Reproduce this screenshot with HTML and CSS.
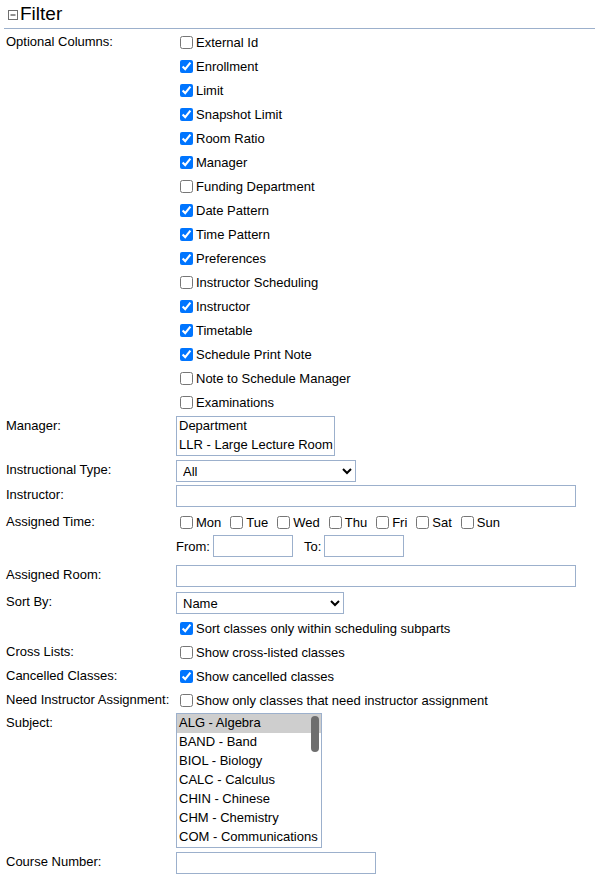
FILE: index.html
```html
<!DOCTYPE html>
<html>
<head>
<meta charset="utf-8">
<title>Filter</title>
<link rel="stylesheet" href="styles.css">
</head>
<body>
<div class="page">
  <div class="header">
    <svg class="toggle" width="10" height="10" viewBox="0 0 10 10"><rect x="0.5" y="0.5" width="9" height="9" fill="#fff" stroke="#6f6f6f"/><line x1="2.5" y1="5" x2="7.5" y2="5" stroke="#222" stroke-width="1"/></svg>
    <span class="title">Filter</span>
  </div>

  <div class="row checks first">
    <div class="label chk-label">Optional Columns:</div>
    <div class="ctl">
      <label class="opt"><input type="checkbox">External Id</label>
      <label class="opt"><input type="checkbox" checked>Enrollment</label>
      <label class="opt"><input type="checkbox" checked>Limit</label>
      <label class="opt"><input type="checkbox" checked>Snapshot Limit</label>
      <label class="opt"><input type="checkbox" checked>Room Ratio</label>
      <label class="opt"><input type="checkbox" checked>Manager</label>
      <label class="opt"><input type="checkbox">Funding Department</label>
      <label class="opt"><input type="checkbox" checked>Date Pattern</label>
      <label class="opt"><input type="checkbox" checked>Time Pattern</label>
      <label class="opt"><input type="checkbox" checked>Preferences</label>
      <label class="opt"><input type="checkbox">Instructor Scheduling</label>
      <label class="opt"><input type="checkbox" checked>Instructor</label>
      <label class="opt"><input type="checkbox" checked>Timetable</label>
      <label class="opt"><input type="checkbox" checked>Schedule Print Note</label>
      <label class="opt"><input type="checkbox">Note to Schedule Manager</label>
      <label class="opt"><input type="checkbox">Examinations</label>
    </div>
  </div>

  <div class="row r-manager">
    <div class="label">Manager:</div>
    <div class="ctl">
      <div class="listbox manager-list">
        <div class="option">Department</div>
        <div class="option">LLR - Large Lecture Room</div>
      </div>
    </div>
  </div>

  <div class="row r-itype">
    <div class="label">Instructional Type:</div>
    <div class="ctl"><select class="sel itype"><option>All</option></select></div>
  </div>

  <div class="row r-instructor">
    <div class="label">Instructor:</div>
    <div class="ctl"><input type="text" class="txt wide"></div>
  </div>

  <div class="row r-time">
    <div class="label chk-label">Assigned Time:</div>
    <div class="ctl">
      <div class="days">
        <label class="day"><input type="checkbox">Mon</label>
        <label class="day"><input type="checkbox">Tue</label>
        <label class="day"><input type="checkbox">Wed</label>
        <label class="day"><input type="checkbox">Thu</label>
        <label class="day"><input type="checkbox">Fri</label>
        <label class="day"><input type="checkbox">Sat</label>
        <label class="day"><input type="checkbox">Sun</label>
      </div>
      <div class="fromto">
        <span>From:</span><input type="text" class="txt short">
        <span class="to">To:</span><input type="text" class="txt short">
      </div>
    </div>
  </div>

  <div class="row r-room">
    <div class="label">Assigned Room:</div>
    <div class="ctl"><input type="text" class="txt wide"></div>
  </div>

  <div class="row r-sort">
    <div class="label">Sort By:</div>
    <div class="ctl"><select class="sel sortby"><option>Name</option></select></div>
  </div>

  <div class="row checks r-sortsub">
    <div class="label chk-label"></div>
    <div class="ctl"><label class="opt"><input type="checkbox" checked>Sort classes only within scheduling subparts</label></div>
  </div>
  <div class="row checks">
    <div class="label chk-label">Cross Lists:</div>
    <div class="ctl"><label class="opt"><input type="checkbox">Show cross-listed classes</label></div>
  </div>
  <div class="row checks">
    <div class="label chk-label">Cancelled Classes:</div>
    <div class="ctl"><label class="opt"><input type="checkbox" checked>Show cancelled classes</label></div>
  </div>
  <div class="row checks">
    <div class="label chk-label">Need Instructor Assignment:</div>
    <div class="ctl"><label class="opt"><input type="checkbox">Show only classes that need instructor assignment</label></div>
  </div>

  <div class="row r-subject">
    <div class="label">Subject:</div>
    <div class="ctl">
      <div class="listbox subject-list">
        <div class="option selected">ALG - Algebra</div>
        <div class="option">BAND - Band</div>
        <div class="option">BIOL - Biology</div>
        <div class="option">CALC - Calculus</div>
        <div class="option">CHIN - Chinese</div>
        <div class="option">CHM - Chemistry</div>
        <div class="option">COM - Communications</div>
        <div class="thumb"></div>
      </div>
    </div>
  </div>

  <div class="row r-course">
    <div class="label">Course Number:</div>
    <div class="ctl"><input type="text" class="txt course"></div>
  </div>
</div>
</body>
</html>
```

FILE: styles.css
```css
html, body {
  margin: 0;
  padding: 0;
  background: #fff;
}
body {
  font-family: "Liberation Sans", Arial, sans-serif;
  font-size: 13px;
  color: #000;
}
.page {
  width: 595px;
}
.header {
  display: flex;
  align-items: center;
  height: 28px;
  margin-left: 4px;
  padding-left: 4px;
  border-bottom: 1px solid #9cb0cc;
}
.toggle {
  display: block;
  margin-top: 1px;
  margin-right: 2px;
}
.title {
  font-size: 19px;
  line-height: 20px;
}
.row {
  display: grid;
  grid-template-columns: 170px 1fr;
  padding-left: 6px;
}
.label {
  line-height: 15px;
  padding-top: 2px;
  white-space: nowrap;
}
.label.chk-label {
  line-height: 24px;
  padding-top: 0;
}
.ctl {
  display: flex;
  flex-direction: column;
  align-items: flex-start;
}
.opt {
  display: flex;
  align-items: center;
  height: 24px;
  white-space: nowrap;
}
input[type="checkbox"] {
  width: 13px;
  height: 13px;
  margin: 3px 3px 3px 4px;
}
.first { margin-top: 1px; }
.r-manager { margin-top: 2px; }
.r-itype { margin-top: 4px; }
.r-instructor { margin-top: 3px; }
.r-time { margin-top: 3px; }
.r-room { margin-top: 8px; }
.r-sort { margin-top: 5px; }
.r-sortsub { margin-top: 2px; }
.r-subject { margin-top: 1px; }
.r-course { margin-top: 4px; }

.listbox {
  position: relative;
  box-sizing: border-box;
  border: 1px solid #9cb0cc;
  background: #fff;
  overflow: hidden;
}
.option {
  line-height: 17px;
  height: 19px;
  padding: 0 2px;
  white-space: nowrap;
}
.option.selected {
  background: #cecece;
}
.manager-list {
  width: 159px;
  height: 40px;
}
.subject-list {
  width: 146px;
  height: 135px;
}
.thumb {
  position: absolute;
  right: 2px;
  top: 2px;
  width: 8px;
  height: 36px;
  border-radius: 4px;
  background: #6e6e6e;
}
.sel {
  box-sizing: border-box;
  height: 22px;
  margin: 0;
  padding: 0 2px;
  border: 1px solid #9cb0cc;
  border-radius: 0;
  background-color: #fff;
  font-family: "Liberation Sans", Arial, sans-serif;
  font-size: 13px;
  color: #000;
}
.itype { width: 180px; }
.sortby { width: 168px; }
.txt {
  box-sizing: border-box;
  height: 22px;
  margin: 0;
  padding: 0 3px;
  border: 1px solid #9cb0cc;
  border-radius: 0;
  font-family: "Liberation Sans", Arial, sans-serif;
  font-size: 13px;
}
.wide { width: 400px; }
.course { width: 200px; }
.short { width: 80px; }
.days {
  display: flex;
  align-items: center;
  height: 24px;
  gap: 5px;
}
.day {
  display: flex;
  align-items: center;
}
.fromto {
  display: flex;
  align-items: center;
  height: 22px;
  margin-top: 1px;
}
.fromto .txt {
  margin-left: 3px;
}
.fromto .to {
  margin-left: 11px;
}
```
